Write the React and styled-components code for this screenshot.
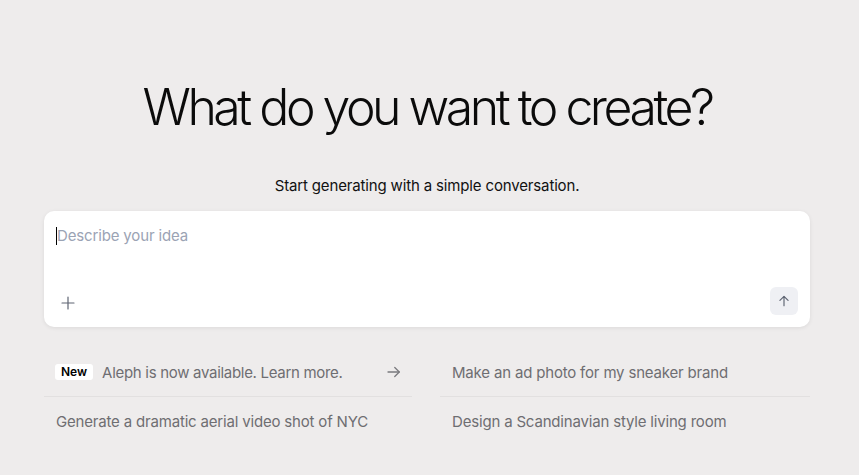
import React from "react";
import styled, { createGlobalStyle } from "styled-components";

const Global = createGlobalStyle`
  html, body { margin: 0; padding: 0; background: #eeecec; }
  body { font-family: Inter, "Liberation Sans", sans-serif; -webkit-font-smoothing: antialiased; }
  * { box-sizing: border-box; }
`;

const Page = styled.main`
  width: 859px;
  height: 475px;
  padding: 77px 49px 0 44px;
  display: flex;
  flex-direction: column;
  align-items: center;
`;

const Title = styled.h1`
  margin: 0;
  font-size: 50px;
  font-weight: 300;
  letter-spacing: -0.07em;
  line-height: 60px;
  color: #0b0b0b;
`;

const Subtitle = styled.p`
  margin: 39px 0 0;
  font-size: 15px;
  line-height: 20px;
  letter-spacing: -0.01em;
  color: #111;
`;

const Card = styled.div`
  margin-top: 15px;
  width: 766px;
  height: 116px;
  background: #fff;
  border-radius: 10px;
  box-shadow: 0 1px 4px rgba(0, 0, 0, 0.08);
  display: flex;
  flex-direction: column;
  justify-content: space-between;
  padding: 15px 12px 12px 10px;
`;

const Input = styled.div`
  display: flex;
  align-items: center;
  padding-left: 2px;
  font-size: 15px;
  line-height: 20px;
  color: #9ba3b4;
  letter-spacing: -0.01em;
`;

const Caret = styled.span`
  display: inline-block;
  width: 1px;
  height: 18px;
  background: #000;
`;

const CardBar = styled.div`
  display: flex;
  justify-content: space-between;
  align-items: center;
`;

const IconButton = styled.button`
  width: 28px;
  height: 28px;
  border: none;
  border-radius: 6px;
  background: ${(p) => (p.$filled ? "#eff0f4" : "transparent")};
  display: flex;
  align-items: center;
  justify-content: center;
  padding: ${(p) => (p.$filled ? "0" : "3px 0 0")};
`;

const Suggestions = styled.div`
  margin-top: 21px;
  width: 766px;
  display: grid;
  grid-template-columns: 368px 370px;
  column-gap: 28px;
`;

const Row = styled.div`
  height: ${(p) => (p.$first ? "49px" : "48px")};
  display: flex;
  align-items: center;
  padding: 0 9px 0 ${(p) => (p.$badge ? "11px" : "12px")};
  border-bottom: ${(p) => (p.$first ? "1px solid #e2e0e0" : "none")};
  font-size: 15px;
  color: #6e6e72;
  letter-spacing: -0.012em;
  gap: 9px;
`;

const Badge = styled.span`
  background: #fff;
  color: #000;
  font-weight: 600;
  font-size: 12px;
  line-height: 16px;
  padding: 0 6px;
  border-radius: 3px;
  letter-spacing: 0;
`;

const Grow = styled.span`
  flex: 1;
  letter-spacing: -0.02em;
`;

const Arrow = () => (
  <svg width="18" height="18" viewBox="0 0 24 24" fill="none" stroke="#7a7a7e" strokeWidth="1.7" strokeLinecap="round" strokeLinejoin="round">
    <path d="M4 12h15" />
    <path d="M13 6l6 6-6 6" />
  </svg>
);

export default function App() {
  return (
    <>
      <Global />
      <Page>
        <Title>What do you want to create?</Title>
        <Subtitle>Start generating with a simple conversation.</Subtitle>
        <Card>
          <Input>
            <Caret />
            Describe your idea
          </Input>
          <CardBar>
            <IconButton aria-label="add">
              <svg width="16" height="16" viewBox="0 0 24 24" fill="none" stroke="#5f6573" strokeWidth="1.8" strokeLinecap="round">
                <path d="M12 3v18M3 12h18" />
              </svg>
            </IconButton>
            <IconButton $filled aria-label="send">
              <svg width="14" height="14" viewBox="0 0 24 24" fill="none" stroke="#5f6573" strokeWidth="2" strokeLinecap="round" strokeLinejoin="round">
                <path d="M12 20V5" />
                <path d="M5 11l7-7 7 7" />
              </svg>
            </IconButton>
          </CardBar>
        </Card>
        <Suggestions>
          <div>
            <Row $first $badge>
              <Badge>New</Badge>
              <Grow>Aleph is now available. Learn more.</Grow>
              <Arrow />
            </Row>
            <Row>Generate a dramatic aerial video shot of NYC</Row>
          </div>
          <div>
            <Row $first>Make an ad photo for my sneaker brand</Row>
            <Row>Design a Scandinavian style living room</Row>
          </div>
        </Suggestions>
      </Page>
    </>
  );
}
